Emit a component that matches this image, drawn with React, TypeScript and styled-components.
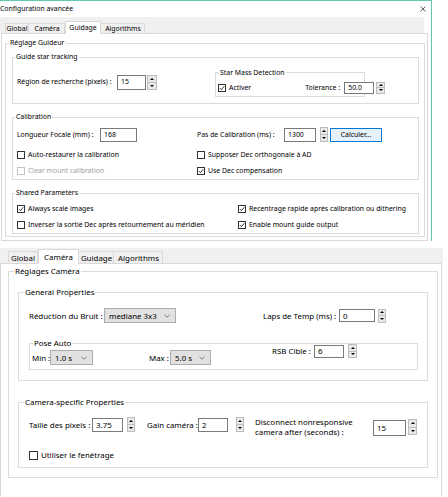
import React from "react";
import { createGlobalStyle, styled } from "styled-components";

const GlobalStyle = createGlobalStyle`
  html, body { margin: 0; padding: 0; background: #ffffff; }
  body {
    font-family: "Noto Sans", "Open Sans", sans-serif;
    color: #000;
  }
  *, *::before, *::after { box-sizing: border-box; }
`;

const Screen = styled.div`
  width: 448px;
  height: 497px;
  overflow: hidden;
  background: #fff;
`;

const Window = styled.div<{ $fs: number; $w: number; $h: number; $mt?: number; $frame?: boolean }>`
  width: ${(p) => p.$w}px;
  height: ${(p) => p.$h}px;
  margin-top: ${(p) => p.$mt ?? 0}px;
  font-size: ${(p) => p.$fs}px;
  line-height: 10px;
  display: flex;
  flex-direction: column;
  border-top: ${(p) => (p.$frame ? "1px solid #63c7b2" : "none")};
  border-right: ${(p) => (p.$frame ? "1px solid #63c7b2" : "none")};
`;

const TitleBar = styled.div`
  height: 16px;
  flex-shrink: 0;
  display: flex;
  align-items: center;
  justify-content: space-between;
  padding-right: 5px;
  background: #fff;
  white-space: nowrap;
`;

const TabStrip = styled.div<{ $h: number; $w: number; $pl: number }>`
  height: ${(p) => p.$h}px;
  width: ${(p) => p.$w}px;
  flex-shrink: 0;
  padding-left: ${(p) => p.$pl}px;
  background: #f0f0f0;
  display: flex;
  align-items: flex-end;
`;

const Tab = styled.div<{ $w: number; $h: number; $active?: boolean }>`
  width: ${(p) => p.$w}px;
  height: ${(p) => (p.$active ? p.$h + 3 : p.$h)}px;
  margin-bottom: ${(p) => (p.$active ? -1 : 0)}px;
  position: relative;
  z-index: ${(p) => (p.$active ? 1 : 0)};
  display: flex;
  align-items: center;
  justify-content: center;
  white-space: nowrap;
  background: ${(p) => (p.$active ? "#ffffff" : "#f0f0f0")};
  border: 1px solid #d9d9d9;
  border-bottom: none;
  border-left-color: ${(p) => (p.$active ? "#d9d9d9" : "transparent")};
  &:first-child {
    border-left-color: #d9d9d9;
  }
`;

const TabPage = styled.div<{ $w: number; $ml: number; $pad: string; $open?: boolean }>`
  width: ${(p) => p.$w}px;
  margin-left: ${(p) => p.$ml}px;
  flex: 1;
  min-height: 0;
  background: #fff;
  border: 1px solid #d9d9d9;
  border-bottom-color: ${(p) => (p.$open ? "transparent" : "#d9d9d9")};
  padding: ${(p) => p.$pad};
  display: flex;
  flex-direction: column;
`;

const Group = styled.fieldset<{ $pad: string; $w?: number; $mt?: number; $fill?: boolean }>`
  margin: ${(p) => p.$mt ?? 0}px 0 0 0;
  min-width: 0;
  width: ${(p) => (p.$w ? `${p.$w}px` : "auto")};
  flex-shrink: 0;
  flex-grow: ${(p) => (p.$fill ? 1 : 0)};
  padding: ${(p) => p.$pad};
  border: 1px solid #dcdcdc;
`;

const Legend = styled.legend<{ $ml: number }>`
  padding: 0 1px;
  margin-left: ${(p) => p.$ml}px;
  line-height: 10px;
  white-space: nowrap;
`;

const Stack = styled.div<{ $gap: number }>`
  display: flex;
  flex-direction: column;
  gap: ${(p) => p.$gap}px;
`;

const Row = styled.div<{ $h?: number; $mt?: number; $mb?: number; $align?: string }>`
  display: flex;
  align-items: ${(p) => p.$align ?? "center"};
  height: ${(p) => (p.$h ? `${p.$h}px` : "auto")};
  margin-top: ${(p) => p.$mt ?? 0}px;
  margin-bottom: ${(p) => p.$mb ?? 0}px;
`;

const Cols = styled.div<{ $cols: string; $row: number; $mb?: number }>`
  display: grid;
  grid-template-columns: ${(p) => p.$cols};
  grid-auto-rows: ${(p) => p.$row}px;
  align-items: center;
  margin-bottom: ${(p) => p.$mb ?? 0}px;
`;

const Field = styled.div<{ $w?: number; $ml?: number; $mt?: number; $top?: boolean }>`
  display: flex;
  align-items: center;
  flex-shrink: 0;
  width: ${(p) => (p.$w ? `${p.$w}px` : "auto")};
  margin-left: ${(p) => p.$ml ?? 0}px;
  margin-top: ${(p) => p.$mt ?? 0}px;
  align-self: ${(p) => (p.$top ? "flex-start" : "auto")};
`;

const Label = styled.span<{ $w?: number }>`
  width: ${(p) => (p.$w ? `${p.$w}px` : "auto")};
  flex-shrink: 0;
  white-space: nowrap;
`;

const TwoLineLabel = styled.span<{ $w: number }>`
  width: ${(p) => p.$w}px;
  flex-shrink: 0;
  line-height: 10px;
`;

const TextBox = styled.div<{ $w: number; $h: number; $mt?: number }>`
  width: ${(p) => p.$w}px;
  height: ${(p) => p.$h}px;
  margin-top: ${(p) => p.$mt ?? 0}px;
  flex-shrink: 0;
  border: 1px solid #7a7a7a;
  background: #fff;
  padding-left: 3px;
  display: flex;
  align-items: center;
`;

const SpinBox = styled.div<{ $w: number; $h: number; $ml: number }>`
  width: ${(p) => p.$w}px;
  height: ${(p) => p.$h}px;
  margin-left: ${(p) => p.$ml}px;
  flex-shrink: 0;
  display: flex;
  flex-direction: column;
  border: 1px solid #bdbdbd;
  background: #e9e9e9;
`;

const SpinHalf = styled.div`
  flex: 1;
  display: flex;
  align-items: center;
  justify-content: center;
  & + & {
    border-top: 1px solid #bdbdbd;
  }
`;

const Combo = styled.div<{ $w: number; $h: number }>`
  width: ${(p) => p.$w}px;
  height: ${(p) => p.$h}px;
  flex-shrink: 0;
  background: #e1e1e1;
  border: 1px solid #adadad;
  padding: 0 5px 0 4px;
  display: flex;
  align-items: center;
  justify-content: space-between;
  white-space: nowrap;
`;

const PushButton = styled.div<{ $w: number; $h: number; $ml: number }>`
  width: ${(p) => p.$w}px;
  height: ${(p) => p.$h}px;
  margin-left: ${(p) => p.$ml}px;
  flex-shrink: 0;
  background: #e5f1fb;
  border: 1px solid #0078d7;
  display: flex;
  align-items: center;
  justify-content: center;
`;

const CheckLine = styled.div<{ $off?: boolean }>`
  display: flex;
  align-items: center;
  white-space: nowrap;
  color: ${(p) => (p.$off ? "#a0a0a0" : "#000")};
`;

const CheckBox = styled.span<{ $size: number; $off?: boolean }>`
  width: ${(p) => p.$size}px;
  height: ${(p) => p.$size}px;
  margin-right: 3px;
  flex-shrink: 0;
  border: 1px solid ${(p) => (p.$off ? "#c4c4c4" : "#333333")};
  background: #fff;
  display: inline-flex;
  align-items: center;
  justify-content: center;
`;

const Spinner = ({ w, h, ml }: { w: number; h: number; ml: number }) => (
  <SpinBox $w={w} $h={h} $ml={ml}>
    <SpinHalf>
      <svg width="4" height="2" viewBox="0 0 4 2">
        <path d="M0 2 L2 0 L4 2 Z" fill="#000" />
      </svg>
    </SpinHalf>
    <SpinHalf>
      <svg width="4" height="2" viewBox="0 0 4 2">
        <path d="M0 0 L4 0 L2 2 Z" fill="#000" />
      </svg>
    </SpinHalf>
  </SpinBox>
);

const Check = ({
  label,
  checked,
  off,
  size = 8,
}: {
  label: string;
  checked?: boolean;
  off?: boolean;
  size?: number;
}) => (
  <CheckLine $off={off}>
    <CheckBox $size={size} $off={off}>
      {checked && (
        <svg width={size - 2} height={size - 2} viewBox="0 0 6 6">
          <path d="M0.8 3.1 L2.4 4.7 L5.3 1.2" fill="none" stroke="#000" strokeWidth="0.8" />
        </svg>
      )}
    </CheckBox>
    {label}
  </CheckLine>
);

const Select = ({ w, h, value }: { w: number; h: number; value: string }) => (
  <Combo $w={w} $h={h}>
    {value}
    <svg width="6" height="4" viewBox="0 0 6 4">
      <path d="M0.5 0.8 L3 3.2 L5.5 0.8" fill="none" stroke="#555" strokeWidth="0.7" />
    </svg>
  </Combo>
);

const GuidageWindow = () => (
  <Window $fs={6.9} $w={432} $h={241} $frame>
    <TitleBar>
      <span>Configuration avancée</span>
      <svg width="6" height="6" viewBox="0 0 6 6">
        <path d="M0.5 0.5 L5.5 5.5 M5.5 0.5 L0.5 5.5" stroke="#222" strokeWidth="0.7" />
      </svg>
    </TitleBar>
    <TabStrip $h={16} $w={424} $pl={5}>
      <Tab $w={24} $h={10}>Global</Tab>
      <Tab $w={36} $h={10}>Caméra</Tab>
      <Tab $w={36} $h={10} $active>Guidage</Tab>
      <Tab $w={44} $h={10}>Algorithms</Tab>
    </TabStrip>
    <TabPage $w={427} $ml={1} $pad="4px 2px 3px 3px">
      <Group $pad="4px 5px 2px 6px" $fill>
        <Legend $ml={-3}>Réglage Guideur</Legend>
        <Stack $gap={8}>
          <Group $pad="5px 4px 6px 4px">
            <Legend $ml={-2}>Guide star tracking</Legend>
            <Row $h={30}>
              <Field $w={198}>
                <Label $w={100}>Région de recherche (pixels) :</Label>
                <TextBox $w={29} $h={15}>15</TextBox>
                <Spinner w={10} h={15} ml={1} />
              </Field>
              <Group $w={150} $pad="3px 2px 1px 2px">
                <Legend $ml={1}>Star Mass Detection</Legend>
                <Row $h={14}>
                  <Check label="Activer" checked />
                  <Field $ml={54}>
                    <Label $w={39}>Tolerance :</Label>
                    <TextBox $w={30} $h={12}>50.0</TextBox>
                    <Spinner w={9} h={12} ml={2} />
                  </Field>
                </Row>
              </Group>
            </Row>
          </Group>

          <Group $pad="5px 4px 0 4px">
            <Legend $ml={-2}>Calibration</Legend>
            <Cols $cols="180px 1fr" $row={15} $mb={5}>
              <Field>
                <Label $w={83}>Longueur Focale (mm) :</Label>
                <TextBox $w={37} $h={14}>168</TextBox>
              </Field>
              <Field>
                <Label $w={87}>Pas de Calibration (ms) :</Label>
                <TextBox $w={32} $h={14}>1300</TextBox>
                <Spinner w={8} h={15} ml={4} />
                <PushButton $w={52} $h={14} $ml={2}>Calculer...</PushButton>
              </Field>
            </Cols>
            <Cols $cols="180px 1fr" $row={16}>
              <Check label="Auto-restaurer la calibration" />
              <Check label="Supposer Dec orthogonale à AD" />
              <Check label="Clear mount calibration" off />
              <Check label="Use Dec compensation" checked />
            </Cols>
          </Group>

          <Group $pad="3px 4px 0 4px">
            <Legend $ml={-2}>Shared Parameters</Legend>
            <Cols $cols="221px 1fr" $row={16}>
              <Check label="Always scale images" checked />
              <Check label="Recentrage rapide après calibration ou dithering" checked />
              <Check label="Inverser la sortie Dec après retournement au méridien" />
              <Check label="Enable mount guide output" checked />
            </Cols>
          </Group>
        </Stack>
      </Group>
    </TabPage>
  </Window>
);

const CameraWindow = () => (
  <Window $fs={7.9} $w={443} $h={249} $mt={7}>
    <TabStrip $h={15} $w={443} $pl={8}>
      <Tab $w={30} $h={12}>Global</Tab>
      <Tab $w={41} $h={12} $active>Caméra</Tab>
      <Tab $w={35} $h={12}>Guidage</Tab>
      <Tab $w={49} $h={12}>Algorithms</Tab>
    </TabStrip>
    <TabPage $w={442} $ml={0} $pad="2px 3px 0 7px" $open>
      <Group $pad="11px 9px 9px 9px">
        <Legend $ml={-4}>Réglages Caméra</Legend>

        <Group $pad="11px 9px 10px 10px">
          <Legend $ml={-5}>General Properties</Legend>
          <Row $h={15}>
            <Field $w={234}>
              <Label $w={75}>Réduction du Bruit :</Label>
              <Select w={72} h={15} value="mediane 3x3" />
            </Field>
            <Field>
              <Label $w={76}>Laps de Temp (ms) :</Label>
              <TextBox $w={36} $h={13}>0</TextBox>
              <Spinner w={8} h={14} ml={3} />
            </Field>
          </Row>
          <Group $pad="2px 9px 4px 2px" $mt={15}>
            <Legend $ml={1}>Pose Auto</Legend>
            <Row $h={15}>
              <Field $w={117}>
                <Label $w={18}>Min :</Label>
                <Select w={43} h={15} value="1.0 s" />
              </Field>
              <Field $w={123}>
                <Label $w={21}>Max :</Label>
                <Select w={41} h={15} value="5.0 s" />
              </Field>
              <Field $top $mt={-6}>
                <Label $w={42}>RSB Cible :</Label>
                <TextBox $w={30} $h={13}>6</TextBox>
                <Spinner w={9} h={14} ml={4} />
              </Field>
            </Row>
          </Group>
        </Group>

        <Group $pad="9px 9px 5px 10px" $mt={16}>
          <Legend $ml={-5}>Camera-specific Properties</Legend>
          <Row $align="flex-start">
            <Field $mt={1}>
              <Label $w={63}>Taille des pixels :</Label>
              <TextBox $w={31} $h={14}>3.75</TextBox>
              <Spinner w={8} h={15} ml={4} />
            </Field>
            <Field $mt={1} $ml={12}>
              <Label $w={51}>Gain caméra :</Label>
              <TextBox $w={30} $h={14}>2</TextBox>
              <Spinner w={8} h={15} ml={8} />
            </Field>
            <Field $mt={1} $ml={11}>
              <TwoLineLabel $w={118}>
                Disconnect nonresponsive
                <br />
                camera after (seconds) :
              </TwoLineLabel>
              <TextBox $w={33} $h={16} $mt={2}>15</TextBox>
              <Spinner w={9} h={16} ml={2} />
            </Field>
          </Row>
          <Row $h={14} $mt={11}>
            <Check label="Utiliser le fenêtrage" size={9} />
          </Row>
        </Group>
      </Group>
    </TabPage>
  </Window>
);

export default function App() {
  return (
    <>
      <GlobalStyle />
      <Screen>
        <GuidageWindow />
        <CameraWindow />
      </Screen>
    </>
  );
}
